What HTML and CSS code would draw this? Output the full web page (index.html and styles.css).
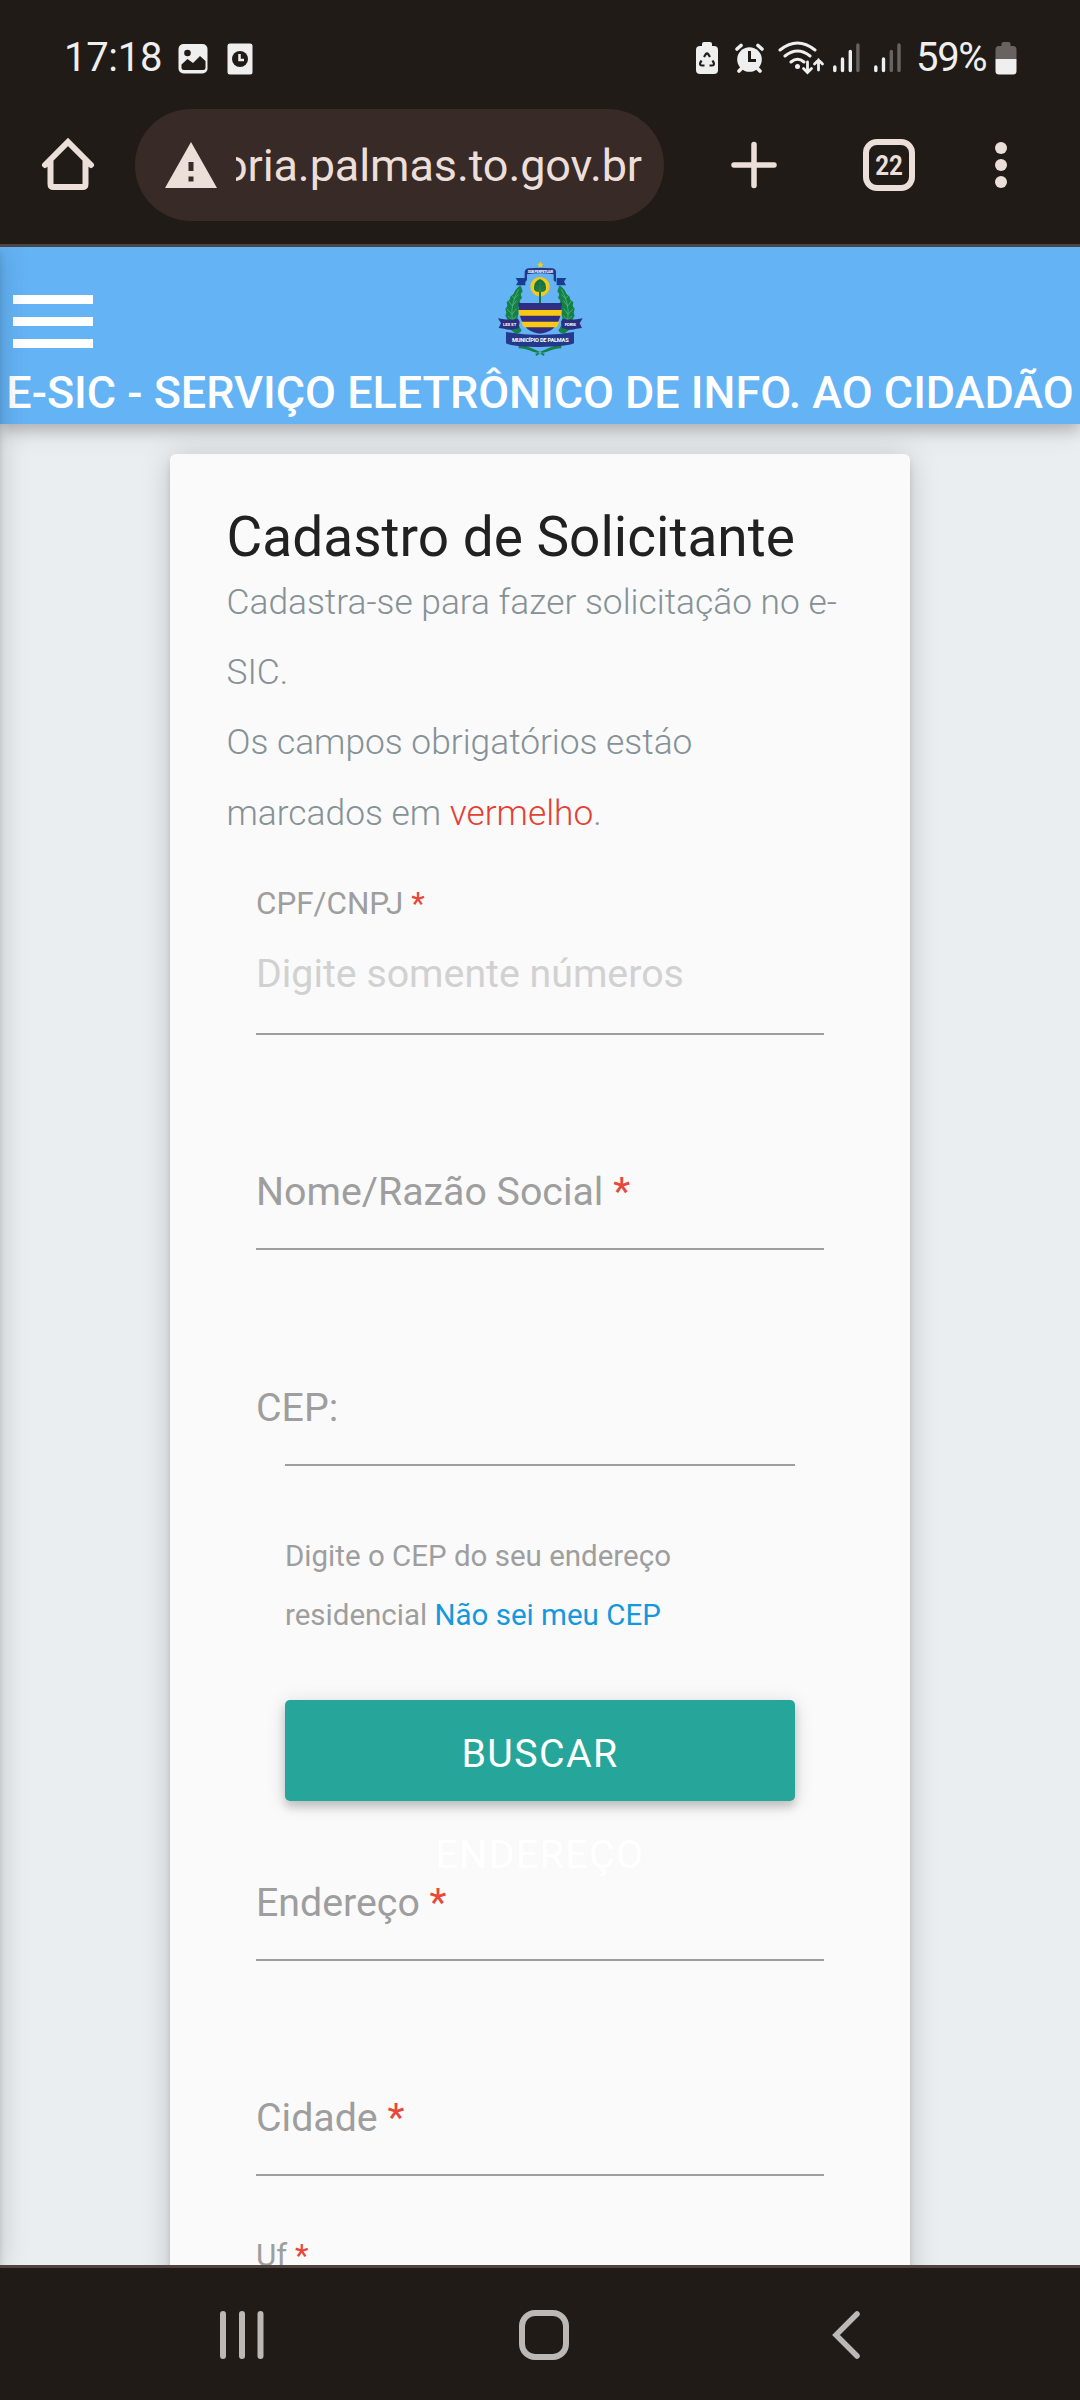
FILE: index.html
```html
<!DOCTYPE html>
<html lang="pt-BR">
<head>
<meta charset="utf-8">
<title>E-SIC</title>
<link rel="stylesheet" href="styles.css">
</head>
<body>
<div class="screen">
  <div class="status-bar">
    <span class="clock">17:18</span>
    <svg class="icon-image" width="30" height="31" viewBox="0 0 30 31"><rect x=".5" y="1" width="29" height="29.500" rx="5" fill="#efefef"/><circle cx="9.500" cy="10" r="3.300" fill="#211b18"/><path d="M3.500 21.500 9.500 16l5.500 4 7-7 5.500 5v6.500q0 2.500-2.500 2.500H6q-2.500 0-2.500-2.500z" fill="#211b18"/></svg>
    <svg class="icon-card" width="26" height="32" viewBox="0 0 26 32"><rect x=".5" y=".5" width="25" height="31" rx="2.500" fill="#efefef"/><circle cx="13" cy="16" r="8" fill="#211b18"/><path d="M12.500 11v6H17" fill="none" stroke="#efefef" stroke-width="2.500"/></svg>
    <svg class="status-icons" width="207" height="36" viewBox="695 40 207 36">
      <g fill="#efefef"><rect x="696" y="46" width="22" height="28" rx="4"/><rect x="702" y="42" width="10" height="6" rx="2"/></g>
      <path d="M704 57l1.800-2.800q1.200-1.500 2.400 0L710 57M701.500 60.500l-1.300 2.500q-.7 2.500 2 2.500h2.300M712.500 60.500l1.300 2.500q.7 2.500-2 2.500h-2.300" fill="none" stroke="#211b18" stroke-width="2.200"/>
      <g stroke="#efefef" stroke-linecap="round" fill="none"><circle cx="749.500" cy="59.500" r="12.300" fill="#efefef" stroke="none"/><path d="m737 49 4-3.500m21 3.500-4-3.500M741.500 68.500l-2.500 2.500M757.500 68.500l2.500 2.500" stroke-width="3.600"/></g>
      <path d="M749.500 51v9.500h6.500" fill="none" stroke="#211b18" stroke-width="3"/>
      <g fill="none" stroke="#efefef" stroke-width="3" stroke-linecap="round"><path d="M780 50q17.500-14 35 0M785 56q12.500-10 25 0M791 62q6.500-5.500 13 0"/></g>
      <circle cx="797.500" cy="66.500" r="2.500" fill="#efefef"/>
      <path d="M807.500 62v10m-4-3.500 4 4 4-4M818.500 70V60m-4 4 4-4 4 4" fill="none" stroke="#efefef" stroke-width="2.800" stroke-linecap="round"/>
      <g stroke-width="3.400" stroke-linecap="round" stroke="#efefef"><path d="M834.800 67v3.500M842.500 59v11.500M850.300 51.500v19M875.800 67v3.500M883.500 59v11.500"/><path stroke="#686360" d="M857.900 45v25.500M891.300 51.500v19M899 45v25.500"/></g>
    </svg>
    <span class="battery-text">59%</span>
    <svg class="battery" width="22" height="34" viewBox="0 0 22 34"><path d="M6.500 3q0-2 2-2h5q2 0 2 2v2H18q3.500 0 3.500 3.500V18H.5V8.500Q.5 5 4 5h2.500z" fill="#686360"/><path d="M.5 18h21v12q0 3.500-3.500 3.500H4Q.5 33.500.5 30z" fill="#efefef"/></svg>
  </div>

  <div class="toolbar">
    <svg class="icon-home" width="54" height="54" viewBox="0 0 54 54"><path d="M4 27 27 4l23 23M9.500 22v24q0 3 3 3h29q3 0 3-3V22" fill="none" stroke="#ecdfda" stroke-width="6" stroke-linecap="round"/></svg>
    <div class="address">
      <svg width="52" height="46" viewBox="0 0 52 46"><path d="M26 0 52 46H0zM23.500 20v9h5v-9zm0 14.500v5h5v-5z" fill="#ecdfda" fill-rule="evenodd"/></svg>
      <div class="url"><span>oria.palmas.to.gov.br</span></div>
    </div>
    <svg class="icon-plus" width="48" height="48" viewBox="0 0 48 48"><path d="M24 3.500v41M4 24h40" stroke="#ecdfda" stroke-width="5.500" stroke-linecap="round"/></svg>
    <div class="tabs"><span>22</span></div>
    <svg class="icon-more" width="14" height="48" viewBox="0 0 14 48"><g fill="#ecdfda"><circle cx="7" cy="7" r="6"/><circle cx="7" cy="24" r="6"/><circle cx="7" cy="41" r="6"/></g></svg>
  </div>

  <div class="page">
    <header class="app-header">
      <div class="header-top">
        <div class="menu"><i></i><i></i><i></i></div>
        <svg class="crest" width="120" height="115" viewBox="0 0 360 345">
          <path fill="#f5d013" d="m181 34 3 7 7 .5-5.500 5 2 7.500-6.500-4-6.500 4 2-7.500-5.500-5 7-.5z"/>
          <circle cx="180" cy="110" r="29" fill="#f2cb1a"/>
          <path d="M180 87q-19 8-18 28 1 12 15 10v35h6v-35q14 2 15-10 1-20-18-28z" fill="#147244"/>
          <path d="M180 96v30m-12-20 12 12 12-12m-25 10 13 6 13-6" fill="none" stroke="#479044" stroke-width="2"/>
          <path d="M107 84h29v22h-28l6-11zM259 84h-29v22h28l-6-11z" fill="#183c91"/>
          <path d="M134 96V65q2-9 12-10 35-4 70 0 11 1 12 10v31q-5-1-7-5V73q-40-6-80 0v17q-2 5-7 6z" fill="#24388b"/>
          <text class="crest-text" x="181" y="69" font-size="11" textLength="76">SUB PERPETUAR</text>
          <path d="M121 106q-12 10-16 16l-4 9-10 9-2 9-9 7 2 12-6 8 3 12-3 9 7 12 2 26 20 14q14 4 20-8-14-20-12-40l4-18-2-12 7-8-3-11 7-9-4-10 6-9-3-9zM239 106q12 10 16 16l4 9 10 9 2 9 9 7-2 12 6 8-3 12 3 9-7 12-2 26-20 14q-14 4-20-8 14-20 12-40l-4-18 2-12-7-8 3-11-7-9 4-10-6-9 3-9z" fill="#148047"/>
          <path d="M116 118Q92 160 96 200q2 18 10 38M244 118q24 42 20 82-2 18-10 38M85 152l12 16 13-17M80 176l16 17 13-17M84 198l14 12 11-13M275 152l-12 16-13-17M280 176l-16 17-13-17M276 198l-14 12-11-13M95 136l9 10 11-12M265 136l-9 10-11-12" fill="none" stroke="#62bd83" stroke-width="2"/>
          <path d="M115 159h131q-2 87-66 92-63-5-65-92z" fill="#302d83"/>
          <path d="M115 180h131l-3 17H118zM123 215h115l-8 17h-99z" fill="#fbc913"/>
          <path d="M54 205l18 3q22 2 42-2l5 9-3 20q-26 8-43 1l-17-2 7-14zM308 205l-18 3q-22 2-42-2l-5 9 3 20q26 8 43 1l17-2-7-14z" fill="#293080"/>
          <text class="crest-text" x="89" y="228" font-size="13" textLength="40">LEX ET</text><text class="crest-text" x="271" y="228" font-size="13" textLength="34">FORIS</text>
          <path d="M116 280q40 14 78 32l-3 6q-16-11-28-11-28-12-47-12zM244 280q-40 14-78 32l3 6q16-11 28-11 28-12 47-12z" fill="#148047"/>
          <path d="M78 246q102 18 204 0v34q-20 10-102 11Q94 290 78 280z" fill="#26388b"/>
          <text class="crest-text" x="181" y="276" font-size="17" textLength="170">MUNICÍPIO DE PALMAS</text>
        </svg>
      </div>
      <h1>E-SIC - SERVIÇO ELETRÔNICO DE INFO. AO CIDADÃO</h1>
    </header>

    <main class="card">
      <h2>Cadastro de Solicitante</h2>
      <p class="intro">Cadastra-se para fazer solicitação no e-<br>SIC.<br>Os campos obrigatórios estáo<br>marcados em <em>vermelho</em>.</p>
      <form class="form">
        <div class="field field-first">
          <label class="small">CPF/CNPJ <b>*</b></label>
          <span class="placeholder">Digite somente números</span>
          <div class="rule"></div>
        </div>
        <div class="field"><label>Nome/Razão Social <b>*</b></label><div class="rule"></div></div>
        <div class="field"><label>CEP:</label><div class="rule rule-inset"></div></div>
        <div class="lookup">
          <p>Digite o CEP do seu endereço<br>residencial <a>Não sei meu CEP</a></p>
          <div class="button">BUSCAR<br>ENDEREÇO</div>
        </div>
        <div class="field field-address"><label>Endereço <b>*</b></label><div class="rule"></div></div>
        <div class="field"><label>Cidade <b>*</b></label><div class="rule"></div></div>
        <div class="field field-uf"><label class="small">Uf <b>*</b></label></div>
      </form>
    </main>
    <div class="drawer-edge"></div>
  </div>

  <nav class="nav-bar">
    <svg width="46" height="50" viewBox="0 0 46 50"><path d="M4 4v42M23 4v42M41.500 4v42" stroke="#bbb8b5" stroke-width="6" stroke-linecap="round"/></svg>
    <svg width="50" height="50" viewBox="0 0 50 50"><rect x="3" y="3" width="44" height="44" rx="13" fill="none" stroke="#bbb8b5" stroke-width="6"/></svg>
    <svg width="30" height="50" viewBox="0 0 30 50"><path d="M26 4 5 25l21 21" fill="none" stroke="#bbb8b5" stroke-width="5.500" stroke-linecap="round"/></svg>
  </nav>
</div>
</body>
</html>
```
FILE: styles.css
```css
* { box-sizing: border-box; }
body { margin: 0; font-family: Roboto, sans-serif; }
h1, h2, p { margin: 0; font-weight: 400; }
svg { display: block; flex: none; }

.screen { width: 1080px; height: 2400px; display: flex; flex-direction: column; overflow: hidden; background: #211b18; }

.status-bar { height: 109px; flex: none; display: flex; align-items: flex-start; padding: 42px 63px 0 64px; color: #efefef; font-size: 40px; line-height: 31px; white-space: nowrap; }
.clock { width: 114px; letter-spacing: -.3px; }
.icon-image { margin-top: 1px; }
.icon-card { margin: 1px 0 0 19px; }
.status-icons { margin: -2px 14px 0 442px; }
.battery-text { width: 79px; letter-spacing: -1.3px; }
.battery { margin-top: -1px; }

.toolbar { height: 138px; flex: none; display: flex; align-items: flex-start; padding-left: 41px; border-bottom: 3px solid #4c4542; }
.icon-home { margin-top: 29px; }
.address { width: 529px; height: 112px; margin-left: 40px; padding: 0 22px 0 30px; border-radius: 56px; background: #382a27; display: flex; align-items: center; }
.url { width: 406px; margin-left: 19px; padding-top: 2px; display: flex; justify-content: flex-end; overflow: hidden; color: #ecdfda; font-size: 45px; line-height: 60px; letter-spacing: -.1px; white-space: nowrap; }
.icon-plus { margin: 32px 0 0 66px; }
.tabs { width: 52px; height: 52px; margin: 30px 0 0 85px; border: 6px solid #ecdfda; border-radius: 14px; color: #ecdfda; font-size: 28px; font-weight: 700; line-height: 41px; display: flex; justify-content: center; }
.tabs span { transform: scaleX(.86); }
.icon-more { margin: 32px 0 0 79px; }

.page { height: 2018px; flex: none; position: relative; overflow: hidden; background: #eaeef1; }
.app-header { height: 177px; background: #64b3f5; box-shadow: 0 6px 14px rgba(0,0,0,.2), 0 3px 30px rgba(0,0,0,.12); color: #fff; position: relative; }
.header-top { display: flex; height: 118px; padding-left: 13px; }
.menu { width: 80px; padding-top: 48px; display: flex; flex-direction: column; gap: 13px; }
.menu i { height: 9px; background: #fff; }
.crest { margin: 3px 0 0 387px; }
.crest-text { fill: #fff; font-family: Roboto, sans-serif; font-weight: 700; text-anchor: middle; }
h1 { font-size: 44.9px; font-weight: 500; line-height: 55px; text-align: center; white-space: nowrap; }

.card { width: 740px; height: 1900px; margin: 30px auto 0; padding: 53.5px 57px 0 56.5px; border-radius: 6px; background: #fafafa; box-shadow: 0 6px 6px rgba(0,0,0,.12), 0 3px 30px rgba(0,0,0,.18); }
h2 { color: #212121; font-size: 55px; line-height: 59px; white-space: nowrap; }
.intro { color: #859196; font-size: 35.35px; font-weight: 300; line-height: 70.4px; white-space: nowrap; }
.intro em { color: #e53f35; font-style: normal; }
.form { padding: 0 29px 0 29.5px; }
.field { height: 215.5px; display: flex; flex-direction: column; justify-content: flex-end; color: #9e9e9e; font-size: 39.3px; line-height: 40px; white-space: nowrap; }
.field b { color: #e8473a; font-weight: 400; }
.field-first { height: 186.6px; }
.small { font-size: 31.4px; line-height: 44px; }
.placeholder { margin: 28px 0 3px; color: #d1d1d1; }
.rule { height: 2px; margin-top: 36px; background: #9e9e9e; }
.rule-inset { margin-left: 29px; margin-right: 29px; }
.lookup { margin: 61px 29px 0; }
.lookup p { color: #9e9e9e; font-size: 29.5px; line-height: 59px; white-space: nowrap; }
.lookup a { color: #1598dc; }
.button { height: 101px; margin-top: 55px; padding-top: 4px; border-radius: 5px; background: #26a69a; box-shadow: 0 6px 8px rgba(0,0,0,.16), 0 3px 20px rgba(0,0,0,.14); color: #fff; font-size: 39.3px; line-height: 101px; letter-spacing: 1.4px; text-align: center; }
.field-address { height: 160px; }
.field-uf { height: 102px; }
.drawer-edge { position: absolute; left: -30px; top: 0; width: 30px; height: 100%; box-shadow: 0 6px 6px rgba(0,0,0,.14), 0 3px 30px rgba(0,0,0,.18); }

.nav-bar { height: 135px; flex: none; display: flex; align-items: flex-start; padding: 42px 0 0 219px; border-top: 3px solid #4f4340; }
.nav-bar svg + svg { margin-left: 254px; }
.nav-bar svg + svg + svg { margin-left: 262px; }
```
